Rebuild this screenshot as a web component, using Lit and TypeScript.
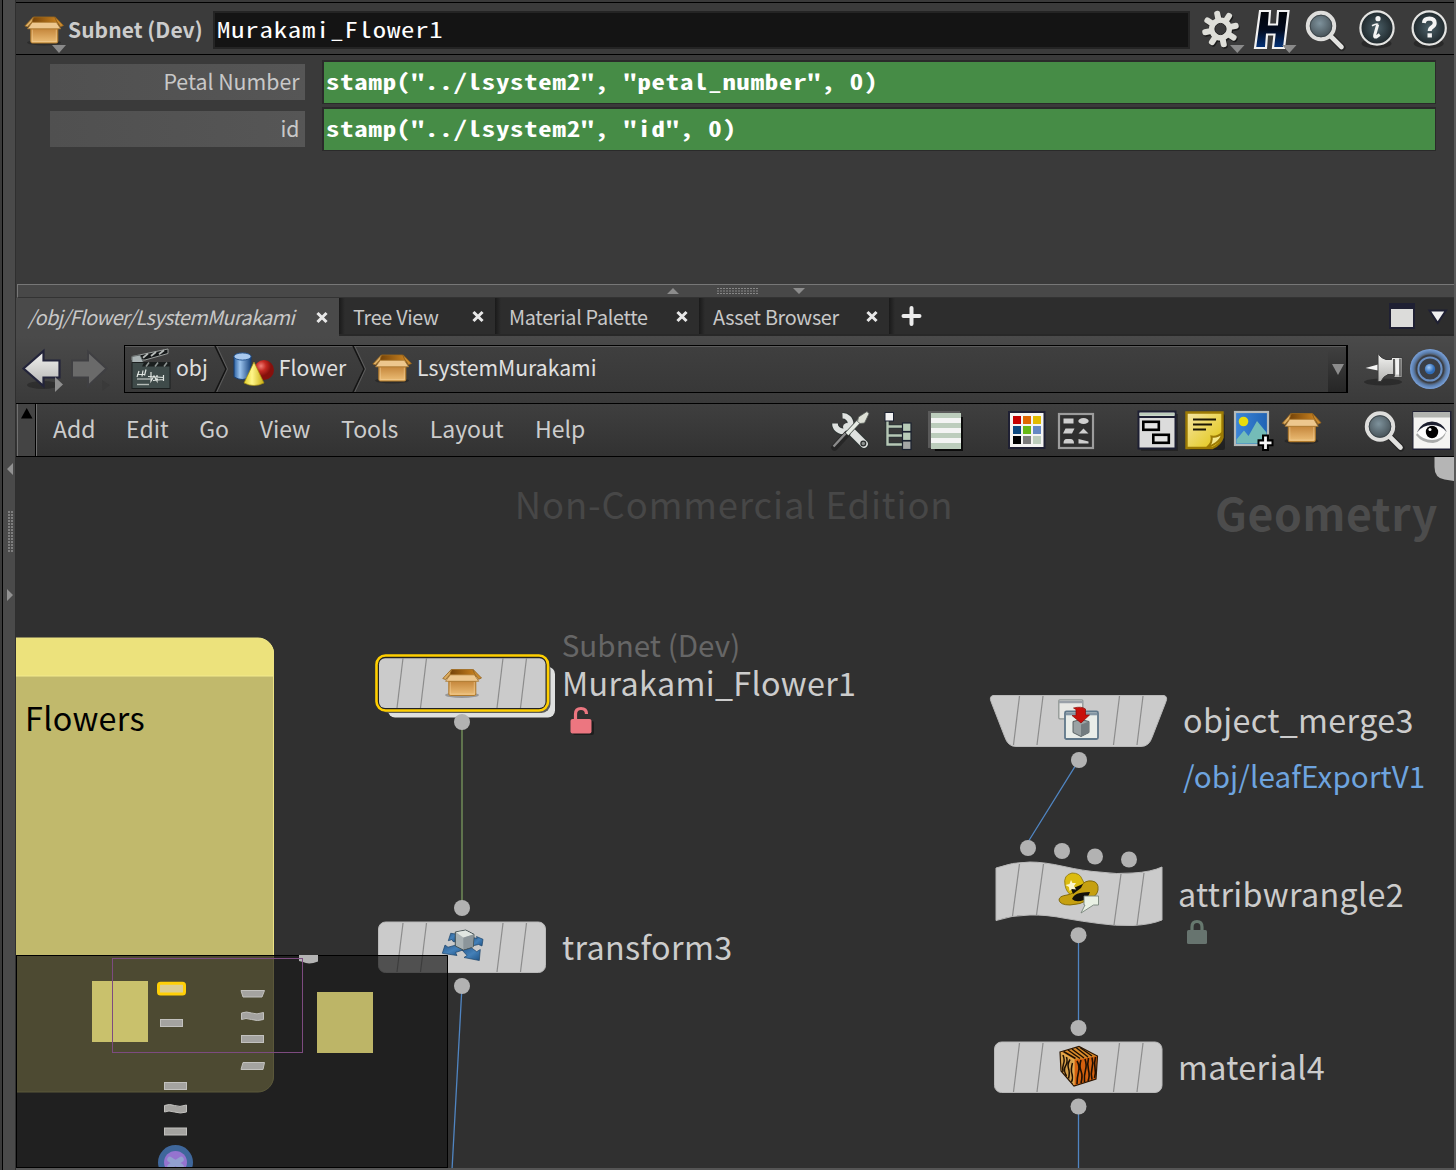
import { LitElement, html, svg, css } from "lit";
import { customElement } from "lit/decorators.js";

const FONT = css`"Noto Sans CJK SC", "Noto Sans", sans-serif`;
const MONO = css`"Noto Sans Mono CJK SC", "DejaVu Sans Mono", monospace`;

/* ---------- shared gradients ---------- */
const gradients = svg`
  <defs>
    <linearGradient id="boxFront" x1="0" y1="0" x2="0" y2="1"><stop offset="0" stop-color="#c4853a"/><stop offset="1" stop-color="#edbf78"/></linearGradient>
    <linearGradient id="boxIn" x1="0" y1="0" x2="1" y2="0"><stop offset="0" stop-color="#6e3e06"/><stop offset="1" stop-color="#c98220"/></linearGradient>
    <linearGradient id="silver" x1="0" y1="0" x2="0" y2="1"><stop offset="0" stop-color="#f4f4f2"/><stop offset="1" stop-color="#b4b4b2"/></linearGradient>
    <linearGradient id="cyl" x1="0" y1="0" x2="1" y2="0"><stop offset="0" stop-color="#2c62a4"/><stop offset=".35" stop-color="#9cc4ee"/><stop offset="1" stop-color="#17427c"/></linearGradient>
    <linearGradient id="cone" x1="0" y1="0" x2="1" y2="0"><stop offset="0" stop-color="#e2cf28"/><stop offset=".4" stop-color="#fff68a"/><stop offset="1" stop-color="#c8ac10"/></linearGradient>
    <linearGradient id="hfill" x1="0" y1="0" x2="0" y2="1"><stop offset="0" stop-color="#020408"/><stop offset=".5" stop-color="#020a1c"/><stop offset="1" stop-color="#04347c"/></linearGradient>
    <linearGradient id="note" x1="0" y1="0" x2="1" y2="1"><stop offset="0" stop-color="#f6e6a4"/><stop offset="1" stop-color="#e0c40c"/></linearGradient>
    <linearGradient id="sky" x1="0" y1="0" x2="1" y2="0"><stop offset="0" stop-color="#3d86d8"/><stop offset="1" stop-color="#1f63b4"/></linearGradient>
    <linearGradient id="arrow" x1="0" y1="0" x2="1" y2="1"><stop offset="0" stop-color="#2a5c90"/><stop offset=".5" stop-color="#4480b8"/><stop offset="1" stop-color="#1f5488"/></linearGradient>
    <radialGradient id="lens" cx=".45" cy=".4"><stop offset="0" stop-color="#7e929c"/><stop offset="1" stop-color="#4a565c"/></radialGradient>
    <radialGradient id="dark" cx=".5" cy=".5"><stop offset="0" stop-color="#4c6068"/><stop offset="1" stop-color="#1e272b"/></radialGradient>
    <radialGradient id="red" cx=".35" cy=".3"><stop offset="0" stop-color="#f08078"/><stop offset=".5" stop-color="#c42a22"/><stop offset="1" stop-color="#86100c"/></radialGradient>
    <radialGradient id="blueBall" cx=".4" cy=".35"><stop offset="0" stop-color="#a4ccf8"/><stop offset="1" stop-color="#2f6cb8"/></radialGradient>
    <radialGradient id="halo" gradientUnits="userSpaceOnUse" cx="20" cy="20" r="20"><stop offset=".7" stop-color="#6c94cc" stop-opacity=".1"/><stop offset=".84" stop-color="#5c80b0"/><stop offset="1" stop-color="#7ba2da"/></radialGradient>
  </defs>`;

/* ---------- icon artwork ---------- */
const boxArt = svg`
  <ellipse cx="20" cy="26.500" rx="17" ry="3" fill="#000" opacity=".25"/>
  <path d="M10 1h20.500l3.500 7H6z" fill="url(#boxIn)" stroke="#a06a1c" stroke-width=".8"/>
  <path d="M9.500.8.800 10l2.700 1L8 6z" fill="#dcae64" stroke="#93611a" stroke-width=".8"/>
  <path d="M31 .8 39.500 9.500l-3 1.300L32.500 5z" fill="#c88a30" stroke="#93611a" stroke-width=".8"/>
  <path d="M6.800 12.500h27V25.500q0 1.500-1.500 1.500h-24q-1.500 0-1.500-1.500z" fill="url(#boxFront)" stroke="#b07a2c" stroke-width="1"/>
  <path d="M8.300 13.500v12h24v-12" fill="none" stroke="#f2cf96" stroke-width=".8" opacity=".7"/>
  <path d="M8.200 6.300h24.200l4.300 6.500H3.600z" fill="#edc78e" stroke="#a8762e" stroke-width=".8"/>`;

const gearArt = svg`
  <g transform="translate(19.500 19)">
    ${[0, 1].map((s) => svg`<g transform="translate(${s ? 0 : 1} ${s ? 0 : 1.5})" fill=${s ? "#deded8" : "#1c1c1c"}>
      ${[0, 45, 90, 135, 180, 225, 270, 315].map((a) => svg`<rect x="-3" y="-18.500" width="6" height="12" rx="2.600" transform="rotate(${a - 12})"/>`)}
      <circle r="11.500"/></g>`)}
    <circle r="5.600" fill="#3a3a3a" stroke="#222" stroke-width="1"/>
  </g>`;

const searchArt = svg`
  <path d="M26 26 37 37" stroke="#1c1c1c" stroke-width="7" stroke-linecap="round" opacity=".6"/>
  <path d="M25 25 36.500 36.500" stroke="#e2e2e0" stroke-width="4.600" stroke-linecap="round"/>
  <circle cx="16" cy="15.500" r="13.200" fill="url(#lens)" stroke="#dededc" stroke-width="4"/>
  <circle cx="16" cy="15.500" r="10.800" fill="none" stroke="#3c4448" stroke-width=".9"/>`;

const clapperArt = svg`
  <path d="M1 12v-3.500L37 1v4.500L14 12z" fill="#16191a" stroke="#9a9e9c" stroke-width="1"/>
  <path d="M12 9.800l5-4.200M20 8l5-4M28 6.300l5-4" stroke="#b8bcba" stroke-width="1.800"/>
  <path d="M1 8.500 9 7l4 8.500H1z" fill="#a9b2b3" stroke="#59605f" stroke-width=".8"/>
  <rect x="1" y="14.500" width="38" height="26" fill="#3f4b4a" stroke="#1c2020" stroke-width="1"/>
  <path d="M13 14.500h26v4H11z" fill="#1a1e1e"/>
  <path d="M15 18.500l3-4M24 18.500l3-4M33 18.500l3-4" stroke="#8d9492" stroke-width="1.600"/>
  <path d="M6 26.500h8M17 28.500l16 1M6 31h13M22 32.500l10-1M8 23l-2 6M12 22.500l-1 6M15 21.500l-1.500 6M20 24v9l3-5 3 5v-6M32.500 27v6" stroke="#dfe4e0" stroke-width="1.200" fill="none"/>
  <path d="M6 36.500h12" stroke="#b4bab6" stroke-width="1.400"/>`;

const shapesArt = svg`
  <path d="M1 4v21q8 5 17 0V4z" fill="url(#cyl)" stroke="#183c6c" stroke-width="1"/>
  <ellipse cx="9.500" cy="4.500" rx="8.500" ry="3.600" fill="#a9c9ee" stroke="#2b5a94" stroke-width="1"/>
  <circle cx="31" cy="18" r="10" fill="url(#red)"/>
  <path d="M21 10 31 31q-10 5-20 0z" fill="url(#cone)" stroke="#a08a10" stroke-width=".7"/>`;

const toolsArt = svg`
  <path d="M12.500 4.800A7.800 7.800 0 1 1 5 12.500" fill="none" stroke="#2f3634" stroke-width="7.600"/>
  <path d="M18 17 34 33" stroke="#2f3634" stroke-width="10" stroke-linecap="round"/>
  <path d="M12.500 4.800A7.800 7.800 0 1 1 5 12.500" fill="none" stroke="#dfe2e0" stroke-width="5.600"/>
  <path d="M17 16 34 33" stroke="#dfe2e0" stroke-width="7.600" stroke-linecap="round"/>
  <circle cx="33.300" cy="32.500" r="2.400" fill="#8b908e" stroke="#2b2f2e" stroke-width="1.300"/>
  <path d="M4.500 36.500 17 23" stroke="#262626" stroke-width="6.500" stroke-linecap="round"/>
  <path d="M3.500 35.500 15.500 22.500" stroke="#8c8c8c" stroke-width="2.400"/>
  <path d="M17 23 30 9" stroke="#4a524e" stroke-width="5"/>
  <path d="M17 23 31 8" stroke="#e6ebe4" stroke-width="3.600"/>
  <path d="M28.500 6 37 .5l2 2.200L34.500 12l-4.500.500-2.500-2z" fill="#dde0d6" stroke="#59605c" stroke-width=".8"/>`;

const treeArt = svg`
  <path d="M9.500 10v23.500h15M9.500 15.500h15M9.500 24.500h15" fill="none" stroke="#2c3436" stroke-width="4.500"/>
  <path d="M9.500 10v23.500h15M9.500 15.500h15M9.500 24.500h15" fill="none" stroke="#b6c7b5" stroke-width="2.400"/>
  <rect x="7" y="1.500" width="8.500" height="8.500" fill="#f2f2f2" stroke="#1c2230" stroke-width="1"/>
  <rect x="24.500" y="12" width="8.500" height="8.500" fill="#b8cbb8" stroke="#1c2230" stroke-width="1.200"/>
  <rect x="24.500" y="21" width="8.500" height="8.500" fill="#b8cbb8" stroke="#1c2230" stroke-width="1.200"/>
  <rect x="24.500" y="30" width="8.500" height="8.500" fill="#a4a6a6" stroke="#1c2230" stroke-width="1.200"/>`;

const listArt = svg`
  <path d="M5 6h32v34H9z" fill="#0c0c0c"/><path d="M2 0h32v36l-32 1z" fill="#5a5a5a"/>
  <rect x="5" y="2" width="30" height="36" fill="#bccdbc"/>
  ${[7, 17, 27].map((y) => svg`<rect x="5" y=${y} width="30" height="5" fill="#f3f4f3"/>`)}`;

const PALETTE = ["#c40000", "#e06800", "#e2bc00", "#0c487e", "#66b814", "#6488c4", "#000", "#7a7a7a", "#bccdbc"];
const paletteArt = svg`
  <rect x="1" y="0" width="37.500" height="38" fill="#1f2033"/><rect x="3" y="2" width="33.500" height="34" fill="#f4f4f2"/>
  ${PALETTE.map((c, i) => svg`<rect x=${6 + (i % 3) * 10} y=${5 + Math.floor(i / 3) * 10} width="8" height="8" fill=${c}/>`)}`;

const shapeGridArt = svg`
  <rect x="3" y="3" width="34" height="34" fill="#2f2f2f" stroke="#9c9c9c" stroke-width="2.200"/>
  <g fill="#cfcfcf"><rect x="7.500" y="7.500" width="10" height="5"/><ellipse cx="27.500" cy="10" rx="5.200" ry="3"/>
  <path d="M9.500 17.500h9l-2.500 5H7zM27.500 17.500l5 5h-10zM7.500 32.500q0-4.500 3-4.500h4q3.500 0 3.500 4.500zM22.500 28l10 2.500v2h-10z"/></g>`;

const netboxArt = svg`
  <rect x="4" y="3" width="37" height="37" fill="#000" opacity=".3"/>
  <rect x="1.500" y=".5" width="37" height="37" fill="#dcdcdc" stroke="#1d1f33" stroke-width="2"/>
  <rect x="2.500" y="2" width="35" height="2.500" fill="#bccdbc"/><rect x="1" y="5" width="38" height="2" fill="#1d1f33"/>
  <g fill="#e4e4e4" stroke="#000" stroke-width="2.600"><rect x="6.300" y="10.800" width="15.500" height="8"/><rect x="16.300" y="23.800" width="15.500" height="8"/></g>`;

const noteArt = svg`
  <rect x="4" y="3" width="36" height="36" rx="2" fill="#000" opacity=".35"/>
  <path d="M1.500 1.500h36v25q-2 7-10 10.500H1.500z" fill="url(#note)" stroke="#9c7a04" stroke-width="2.400"/>
  <path d="M22 36.500q6-5 4.500-11 6 1 10.500-3.500 0 9-15 14.500z" fill="#f4e88c" stroke="#9c7a04" stroke-width="2"/>
  <path d="M8 8.500h23M8 13.500h19M8 18.500h13" stroke="#1c1604" stroke-width="2.200"/>`;

const imageArt = svg`
  <rect x="2" y="1" width="33" height="33" fill="url(#sky)" stroke="#b4babb" stroke-width="2.200"/>
  <circle cx="10.500" cy="10.500" r="4.800" fill="#e8dc0c"/>
  <path d="M3.500 32.500v-4l7.500-9 4.500 5.500L24 10l9.500 11.500v11z" fill="#74bcb8"/>
  <path d="M32.500 23.500v16.500M24.500 31.800h16" stroke="#000" stroke-width="7"/>
  <path d="M32.500 25.500v12.500M26.500 31.800h12" stroke="#f6f6f6" stroke-width="2.800"/>`;

const eyeArt = svg`
  <rect x=".5" y="0" width="39" height="39" fill="#1f2033"/><rect x="1.500" y="1" width="36.500" height="36.500" fill="#f4f4f2"/>
  <rect x="1.500" y="1" width="36.500" height="5.500" fill="#b2b4b0"/>
  <path d="M4 24q7-12 16-12 10 0 14 9-2 9-13 11Q10 32 4 24z" fill="#a9abaa"/>
  <path d="M5 22q7-9 15-9t14 8q-5 8-14 8T5 22z" fill="#fdfdfd"/>
  <circle cx="20" cy="21" r="6.200" fill="#000"/><circle cx="18" cy="18.500" r="1.500" fill="#fff"/>
  <path d="M5 21q5-10.500 15-10.500T35 21q-6-7-15-7T5 21z" fill="#1d2030"/>`;

const pinArt = svg`
  <ellipse cx="19" cy="29" rx="19" ry="3.500" fill="#000" opacity=".3"/>
  <path d="M1.500 15 14 11.500v6z" fill="#f4f4f4"/>
  <path d="M14 .5q3 5 8 6h5.500V4.500H38v20h-8V21.500h-6q-5 2-7 7h-3z" fill="url(#silver)" stroke="#3c3c3c" stroke-width="1"/>
  <path d="M30 6v17" stroke="#3a3a3a" stroke-width="1.600"/>
  <rect x="32" y="7" width="3" height="14.500" fill="#f2f2f2"/><path d="M36 5.500v18" stroke="#555" stroke-width="1.500"/>`;

const ringArt = svg`
  <circle cx="20" cy="20" r="20" fill="url(#halo)"/>
  <circle cx="20" cy="20" r="14.200" fill="#3b3f46"/>
  <circle cx="20" cy="20" r="11.600" fill="none" stroke="#6a90c4" stroke-width="2"/>
  <circle cx="20" cy="20" r="5.200" fill="url(#blueBall)"/>`;

const backArt = svg`
  <ellipse cx="21" cy="35" rx="16" ry="4" fill="#000" opacity=".25"/>
  <path d="M1.500 18.500 21.500 1v9.500h16v17h-16V36z" fill="url(#silver)" stroke="#23243a" stroke-width="2.200"/>
  <path d="M33 27v15l8-7.500z" fill="#8f8f8f"/>`;
const forwardArt = svg`
  <path d="M36.500 18.500 18 1.500v9H2v17h16v8.500z" fill="#6a6a6a" stroke="#3f3f42" stroke-width="2"/>
  <path d="M32 30v11l8-6z" fill="#3a3a3a"/>`;

const icon = (art: unknown, w = 40, h = 40, cls = "") =>
  html`<svg class="icon ${cls}" width=${w} height=${h} viewBox="0 0 ${w} ${h}">${art}</svg>`;

const MENUS = ["Add", "Edit", "Go", "View", "Tools", "Layout", "Help"];
const TABS = [
  { label: "/obj/Flower/LsystemMurakami", active: true, cls: "t1" },
  { label: "Tree View", active: false, cls: "t2" },
  { label: "Material Palette", active: false, cls: "t3" },
  { label: "Asset Browser", active: false, cls: "t4" },
];

const PARAMS = [
  { label: "Petal Number", value: 'stamp("../lsystem2", "petal_number", 0)' },
  { label: "id", value: 'stamp("../lsystem2", "id", 0)' },
];

/* ---------- network canvas pieces ---------- */
const stripes = (x: number, y: number, h: number) =>
  [25, 48.5, 125, 148.5].map((dx) => svg`<path class="stripe" d="M${x + dx} ${y + 1}l-6 ${h - 2}"/>`);
const ports = (list: number[][]) => list.map(([x, y]) => svg`<circle class="port" cx=${x} cy=${y} r="8"/>`);
const miniNode = (x: number, y: number) => svg`<rect class="mini" x=${x + 0.5} y=${y + 0.5} width="22" height="7"/>`;
const miniWave = (x: number, y: number) =>
  svg`<path class="mini" d="M${x + 0.5} ${y + 1.5}q5-2 10 0t12-.5v7q-6 2-12 0t-10 0z"/>`;

@customElement("node-network")
class NodeNetwork extends LitElement {
  static styles = css`
    :host { display: block; min-height: 0; overflow: hidden; background: #303030; }
    svg { display: block; }
    text { font-family: ${FONT}; font-size: 32.300px; letter-spacing: .35px; fill: #ccc; }
    .dim { fill: #666; font-size: 29.600px; letter-spacing: .03px; }
    .ref { fill: #6ea4df; font-size: 29.600px; letter-spacing: .1px; }
    .dark { fill: #000; }
    .mark { fill: #474747; font-size: 36.400px; letter-spacing: .9px; }
    .context { fill: #4c4c4c; font-size: 44.500px; letter-spacing: .6px; font-weight: 700; }
    .body { fill: #cbcbcb; stroke: #b9b9b9; stroke-width: 1; }
    .stripe { stroke: #8c8c8c; stroke-width: 1.200; fill: none; }
    .port { fill: #b2b2b2; }
    .wire { stroke: #5085c2; stroke-width: 1.300; fill: none; }
    .green { stroke: #6c8656; stroke-width: 1.600; }
    .mini { fill: #a4a3a0; stroke: #c2c1be; stroke-width: 1; }
  `;
  render() {
    return html`<svg width="1438" height="711" viewBox="16 457 1438 711">
      ${gradients}
      <text class="mark" x="514.800" y="519">Non-Commercial Edition</text>
      <text class="context" x="1215" y="531">Geometry</text>
      <path d="M1434.500 457v10q0 11 10 12.500l10 1.500v-24z" fill="#b5b5b5"/>

      <path d="M16 638h242a16 16 0 0 1 16 16v422a16 16 0 0 1-16 16H16z" fill="#c1b96c"/>
      <path d="M16 638h242a16 16 0 0 1 16 16v22H16z" fill="#ece27c"/>
      <path d="M16 676h258" stroke="#f3eb8e" stroke-width="1"/>
      <path d="M16 638h242a15.500 15.500 0 0 1 15.500 16V1076a15.500 15.500 0 0 1-15.500 16H16" fill="none" stroke="#ece384" stroke-width="1"/>
      <text class="dark" x="25" y="731">Flowers</text>

      <path class="wire green" d="M462 722v186"/>
      <path class="wire" d="M462 986 452 1170M1079 760 1028 842M1078.500 935v93M1078.500 1106v64"/>

      <rect x="388" y="667" width="167" height="50.500" rx="7" fill="#dfe0df"/>
      <rect x="380" y="661" width="170.500" height="52" rx="9" fill="#5b5b58"/>
      <rect x="376.500" y="655.500" width="171.500" height="55" rx="9" fill="#222" stroke="#ffcf00" stroke-width="2.600"/>
      <rect x="379" y="658.300" width="166.500" height="49.700" rx="6" fill="#cbcbcb"/>
      ${stripes(378, 657, 52)}
      <g transform="translate(442 668.500)">${boxArt}</g>

      <rect class="body" x="378.500" y="922" width="167" height="50.500" rx="7"/>
      ${stripes(378, 922, 51)}
      <g transform="translate(442 930)">
        <g fill="url(#arrow)" stroke="#1c4468" stroke-width=".7">
          <path d="M6.300 10.700 8.700 3.300 14 4v8l-3-.5-1-2z"/>
          <path d="M31 7.500l4 1-.5-2 6.500 2.800L40 16l-3.500-1.500L30 16z"/>
          <path d="M.3 23.300 3 15l3 2.200 8-2.200 7 5-7.500 2.500 1.500 3z"/>
          <path d="M20 20l9.700-2 5 3.700 3.600-2.200-1 11L22 27.500l3-2z"/>
        </g>
        <path d="M13.300 2 23.700 0 32 4.300l-.7 12.400-10 3.300-8-4z" fill="#a9b2b4" stroke="#3c4a4c" stroke-width=".9"/>
        <path d="M14 2.300 23.700.5l7.500 4L21.300 7.500z" fill="#e0e6e2"/><path d="M21.300 7.700 31.600 4.500l-.6 12-9.700 3z" fill="#8b959a"/>
      </g>

      <path class="body" d="M993 695.500h171q4 1 2 6l-14 36q-3 9-11 9h-125q-8 0-11-9l-14-36q-2-5 2-6z"/>
      ${stripes(994.5, 695, 51)}
      <g transform="translate(1058 699)">
        <rect x=".8" y=".8" width="24" height="19" rx="1" fill="#e8e8e4" stroke="#8f9694" stroke-width="1.300"/>
        <path d="M1 3h24" stroke="#9aa0a8" stroke-width="2.500"/>
        <rect x="7" y="12.500" width="33" height="27.500" rx="1.500" fill="#e9ede9" stroke="#60788a" stroke-width="1.800"/>
        <path d="M8 15h31" stroke="#8496a4" stroke-width="2.600"/>
        <path d="M15 22.500l8-2 8 2v11l-8 4-8-4z" fill="#9aa2a4" stroke="#4f585a" stroke-width=".9"/>
        <path d="M23 25.500v12l8-4v-11z" fill="#737c80"/>
        <path d="M15.500 9q8-2 12 1v6h4l-8.500 8-9-7.500h4v-6z" fill="#c8100c" stroke="#8a0a06" stroke-width=".7"/>
      </g>

      <path class="body" d="M996 868q16-6 34-6 14 0 34 4.500t35 5.500q18 2.500 34 1 18-1 29-6v53q-11 4.500-29 5.500-18 .5-34-2-16-2-33-5-20-4-36-3.500-18 0-34 5.500z"/>
      ${[[1019.5, 864, 52], [1043.5, 864, 51], [1121, 874, 51], [1144, 873, 52]].map(([x, y, h]) => svg`<path class="stripe" d="M${x} ${y}l-7 ${h}"/>`)}
      <g transform="translate(1058 873)">
        <path d="M7 12Q5 2 14 0q8 0 10 6 4 5 2 9l-12 8q-6-4-7-11z" fill="#dcbc10" stroke="#8a7408" stroke-width=".8"/>
        <path d="M1 27q0-4 8-5 7-1 14-9 4-6 11-5 7 1 6 9-1 6-8 9-10 6-20 6-10 0-11-5z" fill="#c6a010" stroke="#7c6406" stroke-width=".9"/>
        <path d="M14 26q2-5 8-6 7-1 10-1-2 6-6 8-8 3-12-1zM13 16l12-5-2 4-8 6z" fill="#14110a"/>
        <path d="M13 7l1.500 3 3.500 0-2 3 2 3.500-4-.5-2.500 2-.5-4-3.500-2 4-1z" fill="#fbf6cc"/>
        <path d="M26 23h14.500v9h-5L23 40l4-8h-1z" fill="#e9f1e4" stroke="#77857a" stroke-width=".9"/>
      </g>

      <rect class="body" x="994.500" y="1042" width="167.500" height="50.500" rx="7"/>
      ${stripes(994.5, 1042, 51)}
      <g transform="translate(1059 1046)">
        <path d="M1 6 20 .5 38.500 10 37 33 15 40 2 25z" fill="#d98a2a"/>
        <path d="M15 14 38.500 10 37 33 15 40z" fill="#d4600e"/>
        <path d="M1 6 15 14V40L2 25z" fill="#d6a04a"/>
        <path d="M18 15q3 5 1.500 11T18 38M22 14q-2 6 0 11t0 12M26 13q2 6 .5 11t-1 12M29.500 12q-1.500 6 0 12t-.5 11M33 11.500q1.500 5 0 11t0 11M36.500 11q-1.500 6-.5 11t-.5 10" fill="none" stroke="#1d1004" stroke-width="1.600"/>
        <path d="M4 9q2 5 .5 9T4 26M7.500 11q1.500 5-1 9t1 10M11 13.500q-3 5-1.500 9t0 10M13.500 17q-2 7-.5 11t-.5 8M4.500 5.500l12 7M9 4l12 8.500M13 3l12 9M17 1.500l12 9.500M21 1.500 33 10" fill="none" stroke="#1d1004" stroke-width="1.500"/>
        <path d="M1 6 20 .5 38.500 10 37 33 15 40 2 25z" fill="none" stroke="#2a1604" stroke-width="1.200"/>
        <path d="M2 6.500 15 14M15 14v25" fill="none" stroke="#e8ac50" stroke-width="1.200"/>
      </g>

      ${ports([[462, 722], [462, 908], [462, 986], [1079, 760], [1028, 848], [1062, 851], [1095, 856.5], [1129, 859.5], [1078.5, 935.2], [1078.5, 1028], [1078.5, 1106.5]])}

      <text class="dim" x="561.700" y="656.500">Subnet (Dev)</text>
      <text x="562" y="696">Murakami_Flower1</text>
      <text x="562" y="960">transform3</text>
      <text x="1183" y="733">object_merge3</text>
      <text class="ref" x="1183" y="788">/obj/leafExportV1</text>
      <text x="1178" y="907">attribwrangle2</text>
      <text x="1178" y="1080">material4</text>

      <rect x="573" y="721" width="21" height="14" rx="2" fill="#1d1d1d"/>
      <path d="M575.500 720v-6q0-5.500 5.500-5.500t5.500 5.500" fill="none" stroke="#ec7680" stroke-width="3.200"/>
      <rect x="570.500" y="719" width="21" height="14.500" rx="2" fill="#ec7680"/>
      <path d="M1192 932v-5q0-5.500 5-5.500t5 5.500v5" fill="none" stroke="#66786e" stroke-width="3.200"/>
      <rect x="1187" y="930" width="20" height="14" rx="1.500" fill="#67746f"/>

      <rect x="16" y="955" width="432" height="213" fill="rgb(25 25 25 / .69)"/>
      <path d="M16 955.500h431.500v212H16.500V955" fill="none" stroke="#000" stroke-width="1"/>
      <rect x="92" y="981" width="56" height="61" fill="#c9c16c"/>
      <rect x="317" y="992" width="56" height="61" fill="#bdb567"/>
      <path d="M299 955h19v6.500q-9 3.500-15 .5l-4-1z" fill="#b4b4b4"/>
      <rect x="112.500" y="958.500" width="190" height="94" fill="none" stroke="#7d4b80" stroke-width="1"/>
      <rect x="158.500" y="983.300" width="26" height="10.700" rx="2" fill="#dccd92" stroke="#ffcf08" stroke-width="3"/>
      ${miniNode(160, 1019)}${miniNode(241, 1035)}${miniNode(164, 1082)}${miniNode(164, 1127.5)}
      <path class="mini" d="M241 990.500h23.500l-2.500 6.500h-19z"/>
      <path class="mini" d="M243 1062.500h21.500l-1.500 7h-22z"/>
      ${miniWave(241, 1011.5)}${miniWave(164, 1104)}
      <circle cx="175.500" cy="1162.500" r="17.500" fill="#3f679b"/>
      <circle cx="175.500" cy="1162.500" r="11.500" fill="#9573cf"/>
      <path d="M170 1159.500l11 7M181 1159.500l-11 7" stroke="#92a0cf" stroke-width="5.500" stroke-linecap="round"/>
      <path d="M16 1167.500h432" stroke="#000"/>
    </svg>`;
  }
}

@customElement("app-root")
class AppRoot extends LitElement {
  static styles = css`
    :host { display: block; }
    * { box-sizing: border-box; }
    .app { width: 1456px; height: 1170px; display: grid; grid-template-columns: 16px 1438px 2px; background: #3a3a3a; font-family: ${FONT}; color: #ccc; overflow: hidden; white-space: pre; }
    .icon { display: block; flex: none; overflow: visible; }
    .rail { display: flex; flex-direction: column; align-items: center; padding: 463px 0 0 3px; background: linear-gradient(90deg, #3a3a3a 2px, #000 2px 3px, #4a4a4a 3px 15px, #2f2f2f 15px); }
    .edge { background: #5a5a5a; }
    .main { display: grid; grid-template-rows: 55px 229px 14px 38px 67px 54px 711px 2px; min-width: 0; }
    .foot { background: #555; }

    .head { display: flex; align-items: center; border-top: 1px solid #000; margin-top: 2px; border-bottom: 1px solid #000; background: #3b3b3b; padding: 0 5px 0 8px; }
    .head-box { margin-top: 10px; }
    .title { font-weight: 700; font-size: 21px; letter-spacing: .05px; line-height: 30px; margin: 0 0 0 4px; width: 145px; }
    .name { width: 977px; height: 38px; align-self: flex-start; margin-top: 8px; background: #141414; border: 2px solid #242424; color: #fff; font: 21.400px/32px ${MONO}; padding-left: 2px; }
    .wide { display: inline-block; transform: scaleX(1.25); transform-origin: 0 50%; letter-spacing: .63px; }
    .head-icons { display: flex; gap: 12px; margin-left: 11px; margin-top: 2px; }

    .params { padding: 5px 18px 0 34px; display: flex; flex-direction: column; gap: 3px; background: #3a3a3a; }
    .param { display: flex; align-items: center; gap: 17px; height: 44px; }
    .label { width: 255px; height: 36px; background: linear-gradient(90deg, #505050, #565656); text-align: right; padding-right: 5.500px; font-size: 21.300px; line-height: 33px; margin-top: -1px; color: #c8c8c8; }
    .value { flex: 1; height: 44px; background: #468c46; border: 2px solid #2a2a2a; border-width: 2px 1px 1px 2px; color: #fff; font: 700 21.400px/37px ${MONO}; padding-left: 2px; }

    .split { display: flex; justify-content: center; align-items: center; margin-left: 1px; border-top: 1px solid #777; border-left: 1px solid #777; border-bottom: 1px solid #333; background: #484848; }
    .tabs { display: flex; background: #2d2d2d; border-bottom: 2px solid #282828; }
    .tab { display: flex; align-items: center; justify-content: space-between; font-size: 19.800px; letter-spacing: -.3px; line-height: 36px; padding: 0 11px 0 14px; color: #c8c8c8; background: linear-gradient(90deg, #1a1a1a, #2d2d2d 6px); }
    .tab .txt { padding-top: 2px; }
    .tab.active { background: #4a4a4a; font-style: italic; letter-spacing: -.58px; height: 38px; padding-left: 12px; }
    .tab.active .txt { padding-top: 0; }
    .t1 { width: 323px; } .t2 { width: 156px; } .t3 { width: 204px; } .t4 { width: 190px; }
    .newtab { flex: 1; display: flex; align-items: center; padding: 0 6px 0 12px; background: linear-gradient(90deg, #1a1a1a, #2d2d2d 6px); }
    .spacer { flex: 1; }

    .path { display: flex; align-items: center; background: linear-gradient(#4a4a4a, #3a3a3a); padding: 0 4px 1px 6px; }
    .crumbs { display: flex; width: 1224px; height: 48px; margin-left: 16px; border: 1px solid #000; border-right-width: 2px; background: linear-gradient(#5c5c5c 1px, #3f3f3f 1px, #383838); font-size: 21.200px; line-height: 41px; color: #e0e0e0; }
    .crumb { display: flex; align-items: center; gap: 4px; padding-left: 6px; }
    .crumb .txt { height: 46px; }
    .tight { padding-left: 5px; }
    .drop { width: 18px; margin-left: auto; background: linear-gradient(#5c5c5c 1px, #404040 1px, #262626); display: flex; align-items: center; justify-content: center; }
    .fwd { margin-left: 8px; }
    .ring { margin-left: 4px; }

    .menu { display: flex; align-items: center; border-top: 1px solid #000; border-bottom: 1px solid #000; background: linear-gradient(#3f3f3f, #323232); padding-right: 2px; }
    .grip { width: 20px; height: 52px; margin-left: 1px; border-left: 1px solid #707070; background: linear-gradient(90deg, #444 17px, #000 17px 18px, #707070 18px); padding: 4px 0 0 2px; }
    .menus { display: flex; gap: 30.600px; padding-left: 16px; font-size: 23px; line-height: 46px; margin-top: -4px; }
    .menus span:nth-child(n + 6) { margin-left: .8px; }
    .tools { display: flex; gap: 8px; margin-left: auto; margin-top: 2px; }
    .g1 { margin-left: 33px; } .g2 { margin-left: 1px; } .g3 { margin-left: 35px; }
  `;

  private tab(t: (typeof TABS)[number]) {
    return html`<div class="tab ${t.cls} ${t.active ? "active" : ""}">
      <span class="txt">${t.label}</span>
      ${icon(svg`<path d="M2.500 3l7 7M9.500 3l-7 7" stroke="#e8e8e8" stroke-width="3" stroke-linecap="square"/>`, 12, 12)}
    </div>`;
  }

  render() {
    const caret = svg`<path d="M29 35h14.500l-7.200 8z" fill="#8a8a8a"/>`;
    const sep = icon(svg`<path d="M1 0 12 23 1 46" fill="none" stroke="#141414" stroke-width="1.500"/><path d="M2.800 0 13.500 23 2.800 46" fill="none" stroke="#5e5e5e" stroke-width="1"/>`, 14, 46);
    return html`<div class="app">
      <div class="rail">
        ${icon(svg`
          <path d="M9 0v12L3 6zM3 126v12l6-6z" fill="#929292"/>
          ${Array.from({ length: 14 }, (_, i) => svg`<path d="M4 ${49 + i * 3}h2M7 ${49 + i * 3}h2" stroke="#909090" stroke-width="1.300"/>`)}`, 12, 140)}
      </div>
      <div class="main">
        <div class="head">
          ${icon(svg`${boxArt}<path d="M28 29h14l-7 8z" fill="#8a8a8a"/>`, 40, 36, "head-box")}
          <div class="title">Subnet (Dev)</div>
          <div class="name"><span class="wide">Murakami_Flower1</span></div>
          <div class="head-icons">
            ${icon(svg`${gradients}${gearArt}${caret}`)}
            ${icon(svg`
              <path d="M7 1h10l-1 13.500h8L25 1h10.500L31 38H20l1.500-13.500h-7.500L13 38H2z" fill="url(#hfill)" stroke="#f2f2f2" stroke-width="2.200"/>${caret}`)}
            ${icon(svg`<g transform="translate(0 .5)">${searchArt}</g>`)}
            ${icon(svg`<g transform="translate(-.5 -.5)"><ellipse cx="20" cy="34" rx="15" ry="5" fill="#000" opacity=".3"/><circle cx="20.500" cy="18.500" r="16.600" fill="url(#dark)" stroke="#e4e4e2" stroke-width="2.200"/>
              <circle cx="21.500" cy="9.200" r="2.600" fill="#f4f4f4"/><path d="M15.500 16.200q5-2.500 6-1.200" fill="none" stroke="#f4f4f4" stroke-width="1.800"/><path d="M21.200 15l-3 10.500q-.5 2.500 1.500 2l3.500-2.500" fill="none" stroke="#f4f4f4" stroke-width="3"/></g>`)}
            ${icon(svg`<g transform="translate(-.3 -.5)"><ellipse cx="20" cy="34" rx="15" ry="5" fill="#000" opacity=".3"/><circle cx="20.500" cy="18.500" r="16.600" fill="url(#dark)" stroke="#e4e4e2" stroke-width="2.200"/>
              <path d="M15.200 13.500q.3-4.500 5.500-4.500 5.300.2 5.300 4.500 0 2.500-2.500 4-2.500 1.500-2.500 4" fill="none" stroke="#f4f4f4" stroke-width="4"/><rect x="18.800" y="23.800" width="4.400" height="4.200" fill="#f4f4f4"/></g>`)}
          </div>
        </div>
        <div class="params">
          ${PARAMS.map((p) => html`<div class="param"><div class="label">${p.label}</div><div class="value"><span class="wide">${p.value}</span></div></div>`)}
        </div>
        <div class="split">
          ${icon(svg`<path d="M0 9h12L6 3zM126 3h12l-6 6z" fill="#8c8c8c"/>
            ${Array.from({ length: 14 }, (_, i) => svg`<path d="M${50 + i * 3} 3.500h2M${50 + i * 3} 6h2M${50 + i * 3} 8.500h2" stroke="#868686" stroke-width="1"/>`)}`, 138, 12)}
        </div>
        <div class="tabs">
          ${TABS.map((t) => this.tab(t))}
          <div class="newtab">
            ${icon(svg`<path d="M10.500 2v16M2.500 10h16" stroke="#ececec" stroke-width="4" stroke-linecap="round"/>`, 20, 20)}
            <div class="spacer"></div>
            ${icon(svg`<rect x="0" y="0" width="26" height="26" fill="#1f2033"/><rect x="2" y="6" width="22" height="18" fill="#dcdcda"/>
              <path d="M40.500 7.500H57L48.700 20z" fill="#f0f0f0" stroke="#1f2033" stroke-width="2"/>`, 59, 26)}
          </div>
        </div>
        <div class="path">
          ${icon(backArt, 40, 38)}
          ${icon(forwardArt, 38, 38, "fwd")}
          <div class="crumbs">
            <div class="crumb">${icon(clapperArt, 41, 42)}<span class="txt">obj</span></div>
            <div class="crumb">${sep}</div>
            <div class="crumb tight">${icon(shapesArt, 42, 34)}<span class="txt">Flower</span></div>
            <div class="crumb">${sep}</div>
            <div class="crumb">${icon(boxArt, 41, 30)}<span class="txt">LsystemMurakami</span></div>
            <div class="drop">${icon(svg`<path d="M1 0h12L7 11z" fill="#8c8c8c"/>`, 12, 11)}</div>
          </div>
          <div class="spacer"></div>
          ${icon(pinArt, 42, 32)}
          ${icon(ringArt, 40, 40, "ring")}
        </div>
        <div class="menu">
          <div class="grip">${icon(svg`<path d="M1 10.500h11.500L6.700 0z" fill="#000"/>`, 12, 11)}</div>
          <div class="menus">${MENUS.map((m) => html`<span>${m}</span>`)}</div>
          <div class="tools">
            ${icon(toolsArt)}${icon(treeArt)}${icon(listArt)}
            ${icon(paletteArt, 40, 40, "g1")}${icon(shapeGridArt, 40, 40, "g2")}
            ${icon(netboxArt, 40, 40, "g1")}${icon(noteArt)}${icon(imageArt)}${icon(svg`<g transform="translate(.5 1.500) scale(1 1.080)">${boxArt}</g>`)}
            ${icon(searchArt, 40, 40, "g3")}${icon(eyeArt)}
          </div>
        </div>
        <node-network></node-network>
        <div class="foot"></div>
      </div>
      <div class="edge"></div>
    </div>`;
  }
}
